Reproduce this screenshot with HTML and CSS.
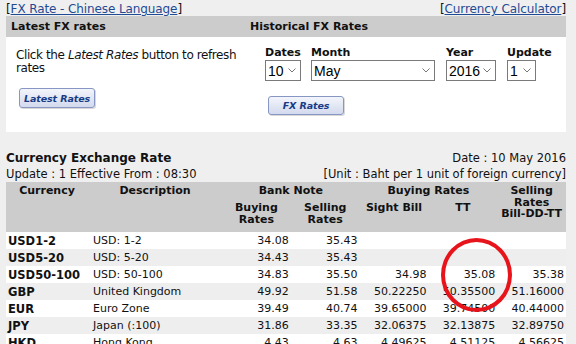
FILE: index.html
```html
<!DOCTYPE html>
<html>
<head>
<meta charset="utf-8">
<link rel="stylesheet" href="styles.css">
</head>
<body>
<div class="page">
  <div class="toplinks">
    <span>[<a href="#">FX Rate - Chinese Language</a>]</span>
    <span>[<a href="#">Currency Calculator</a>]</span>
  </div>

  <div class="panel">
    <div class="ph">Latest FX rates</div>
    <div class="ph">Historical FX Rates</div>
    <div class="pb left">
      <p class="info">Click the <i>Latest Rates</i> button to refresh rates</p>
      <button class="btn btn-latest">Latest Rates</button>
    </div>
    <div class="pb right">
      <div class="fields">
        <div class="field f-date">
          <label>Dates</label>
          <div class="sel"><span>10</span><svg class="chev" width="8" height="5" viewBox="0 0 8 5"><path d="M0.5 0.5 L4 4 L7.5 0.5" fill="none" stroke="#777" stroke-width="1"/></svg></div>
        </div>
        <div class="field f-month">
          <label>Month</label>
          <div class="sel"><span>May</span><svg class="chev" width="8" height="5" viewBox="0 0 8 5"><path d="M0.5 0.5 L4 4 L7.5 0.5" fill="none" stroke="#777" stroke-width="1"/></svg></div>
        </div>
        <div class="field f-year">
          <label>Year</label>
          <div class="sel"><span>2016</span><svg class="chev" width="8" height="5" viewBox="0 0 8 5"><path d="M0.5 0.5 L4 4 L7.5 0.5" fill="none" stroke="#777" stroke-width="1"/></svg></div>
        </div>
        <div class="field f-upd">
          <label>Update</label>
          <div class="sel"><span>1</span><svg class="chev" width="8" height="5" viewBox="0 0 8 5"><path d="M0.5 0.5 L4 4 L7.5 0.5" fill="none" stroke="#777" stroke-width="1"/></svg></div>
        </div>
      </div>
      <button class="btn btn-fx">FX Rates</button>
    </div>
  </div>

  <div class="titlerow">
    <span class="title">Currency Exchange Rate</span>
    <span>Date : 10 May 2016</span>
  </div>
  <div class="subrow">
    <span>Update : 1 Effective From : 08:30</span>
    <span>[Unit : Baht per 1 unit of foreign currency]</span>
  </div>

  <div class="tablewrap">
    <table class="rates">
      <colgroup>
        <col class="c-cur"><col class="c-desc"><col class="c-num"><col class="c-num"><col class="c-num"><col class="c-num"><col class="c-num">
      </colgroup>
      <thead>
        <tr class="h1">
          <th rowspan="2">Currency</th>
          <th rowspan="2">Description</th>
          <th colspan="2">Bank Note</th>
          <th colspan="2">Buying Rates</th>
          <th rowspan="2" class="sell">Selling<br>Rates<br>Bill-DD-TT</th>
        </tr>
        <tr class="h2">
          <th>Buying Rates</th>
          <th>Selling Rates</th>
          <th>Sight Bill</th>
          <th>TT</th>
        </tr>
      </thead>
      <tbody>
        <tr><td class="cur">USD1-2</td><td class="desc">USD: 1-2</td><td class="n">34.08</td><td class="n">35.43</td><td class="n"></td><td class="n"></td><td class="n"></td></tr>
        <tr><td class="cur">USD5-20</td><td class="desc">USD: 5-20</td><td class="n">34.43</td><td class="n">35.43</td><td class="n"></td><td class="n"></td><td class="n"></td></tr>
        <tr><td class="cur">USD50-100</td><td class="desc">USD: 50-100</td><td class="n">34.83</td><td class="n">35.50</td><td class="n">34.98</td><td class="n">35.08</td><td class="n">35.38</td></tr>
        <tr><td class="cur">GBP</td><td class="desc">United Kingdom</td><td class="n">49.92</td><td class="n">51.58</td><td class="n">50.22250</td><td class="n">50.35500</td><td class="n">51.16000</td></tr>
        <tr><td class="cur">EUR</td><td class="desc">Euro Zone</td><td class="n">39.49</td><td class="n">40.74</td><td class="n">39.65000</td><td class="n">39.74500</td><td class="n">40.44000</td></tr>
        <tr><td class="cur">JPY</td><td class="desc">Japan (:100)</td><td class="n">31.86</td><td class="n">33.35</td><td class="n">32.06375</td><td class="n">32.13875</td><td class="n">32.89750</td></tr>
        <tr><td class="cur">HKD</td><td class="desc">Hong Kong</td><td class="n">4.43</td><td class="n">4.63</td><td class="n">4.49625</td><td class="n">4.51125</td><td class="n">4.56625</td></tr>
        <tr><td class="cur">CHF</td><td class="desc">Switzerland</td><td class="n">35.54</td><td class="n">36.86</td><td class="n">35.75500</td><td class="n">35.84000</td><td class="n">36.49000</td></tr>
      </tbody>
    </table>
    <div class="mark"></div>
  </div>
</div>
</body>
</html>
```
FILE: styles.css
```css
html, body {
  margin: 0;
  padding: 0;
  background: #efefef;
}
body {
  font-family: "DejaVu Sans", Verdana, sans-serif;
  color: #111;
}
.page {
  width: 560px;
  margin-left: 6px;
}
.toplinks {
  display: flex;
  justify-content: space-between;
  height: 16px;
  font-size: 12px;
  line-height: 18px;
  letter-spacing: -0.1px;
}
.toplinks a {
  color: #1f4a94;
  text-decoration: underline;
}
.panel {
  display: grid;
  grid-template-columns: 239px 1fr;
  grid-template-rows: 21px 95px;
}
.ph {
  background: #cccccc;
  font-weight: bold;
  font-size: 11px;
  line-height: 21px;
  padding-left: 5px;
}
.pb {
  background: #fff;
}
.left {
  padding: 12px 0 0 10px;
}
.info {
  margin: 0;
  font-size: 12px;
  line-height: 13px;
  letter-spacing: -0.4px;
  width: 229px;
}
.btn {
  display: block;
  font-family: "DejaVu Sans", Verdana, sans-serif;
  font-weight: bold;
  font-style: italic;
  font-size: 9.5px;
  letter-spacing: -0.1px;
  white-space: nowrap;
  color: #173b86;
  border: 1px solid #8796c2;
  border-radius: 3px;
  background: linear-gradient(#f3f5fb, #d3daee);
  padding: 0;
  box-shadow: 1px 1px 0 #d8d8d8;
}
.btn-latest {
  margin: 13px 0 0 3px;
  width: 76px;
  height: 20px;
}
.right {
  padding: 9px 0 0 20px;
}
.fields {
  display: flex;
  gap: 10px;
}
.field label {
  display: block;
  font-weight: bold;
  font-size: 11px;
  line-height: 14px;
}
.sel {
  box-sizing: border-box;
  height: 21px;
  border: 1px solid #7a7a7a;
  background: #fff;
  display: flex;
  align-items: center;
  justify-content: space-between;
  padding: 0 4px 0 2px;
  font-family: "Liberation Sans", Arial, sans-serif;
  font-size: 14px;
  color: #000;
}
.f-date { width: 36px; }
.f-month { width: 124px; }
.f-year { width: 50px; }
.f-upd { width: 29px; }
.f-year, .f-upd { margin-left: 1px; }
.btn-fx {
  margin: 15px 0 0 3px;
  width: 76px;
  height: 19px;
}
.titlerow {
  display: flex;
  justify-content: space-between;
  align-items: baseline;
  margin-top: 18px;
  height: 17px;
  font-size: 11.5px;
  line-height: 17px;
}
.title {
  font-size: 12px;
  font-weight: bold;
}
.subrow {
  display: flex;
  justify-content: space-between;
  height: 15px;
  font-size: 11.5px;
  line-height: 15px;
}
.tablewrap {
  position: relative;
}
.rates {
  width: 560px;
  border-collapse: collapse;
  table-layout: fixed;
  font-size: 11px;
}
.c-cur { width: 82px; }
.c-desc { width: 134px; }
.c-num { width: 68.8px; }
.rates thead th {
  background: #cccccc;
  font-weight: bold;
  vertical-align: top;
  line-height: 12px;
  padding: 3px 2px 0;
}
.rates .h1 th { height: 14px; }
.rates .h2 th { height: 30px; }
.rates th.sell { line-height: 11.5px; }
.rates td {
  padding: 1px 2px 0;
  line-height: 16px;
  white-space: nowrap;
}
.rates td.desc { padding-left: 5px; }
.rates tbody tr:nth-child(odd) { background: #fff; }
.rates tbody tr:nth-child(even) { background: #eeeeee; }
.rates td.cur {
  font-weight: bold;
  font-size: 11.5px;
}
.rates td.n { text-align: right; }
.mark {
  position: absolute;
  left: 435px;
  top: 56px;
  width: 71px;
  height: 74px;
  box-sizing: border-box;
  border: 4px solid #e8141b;
  border-radius: 50%;
}
```
